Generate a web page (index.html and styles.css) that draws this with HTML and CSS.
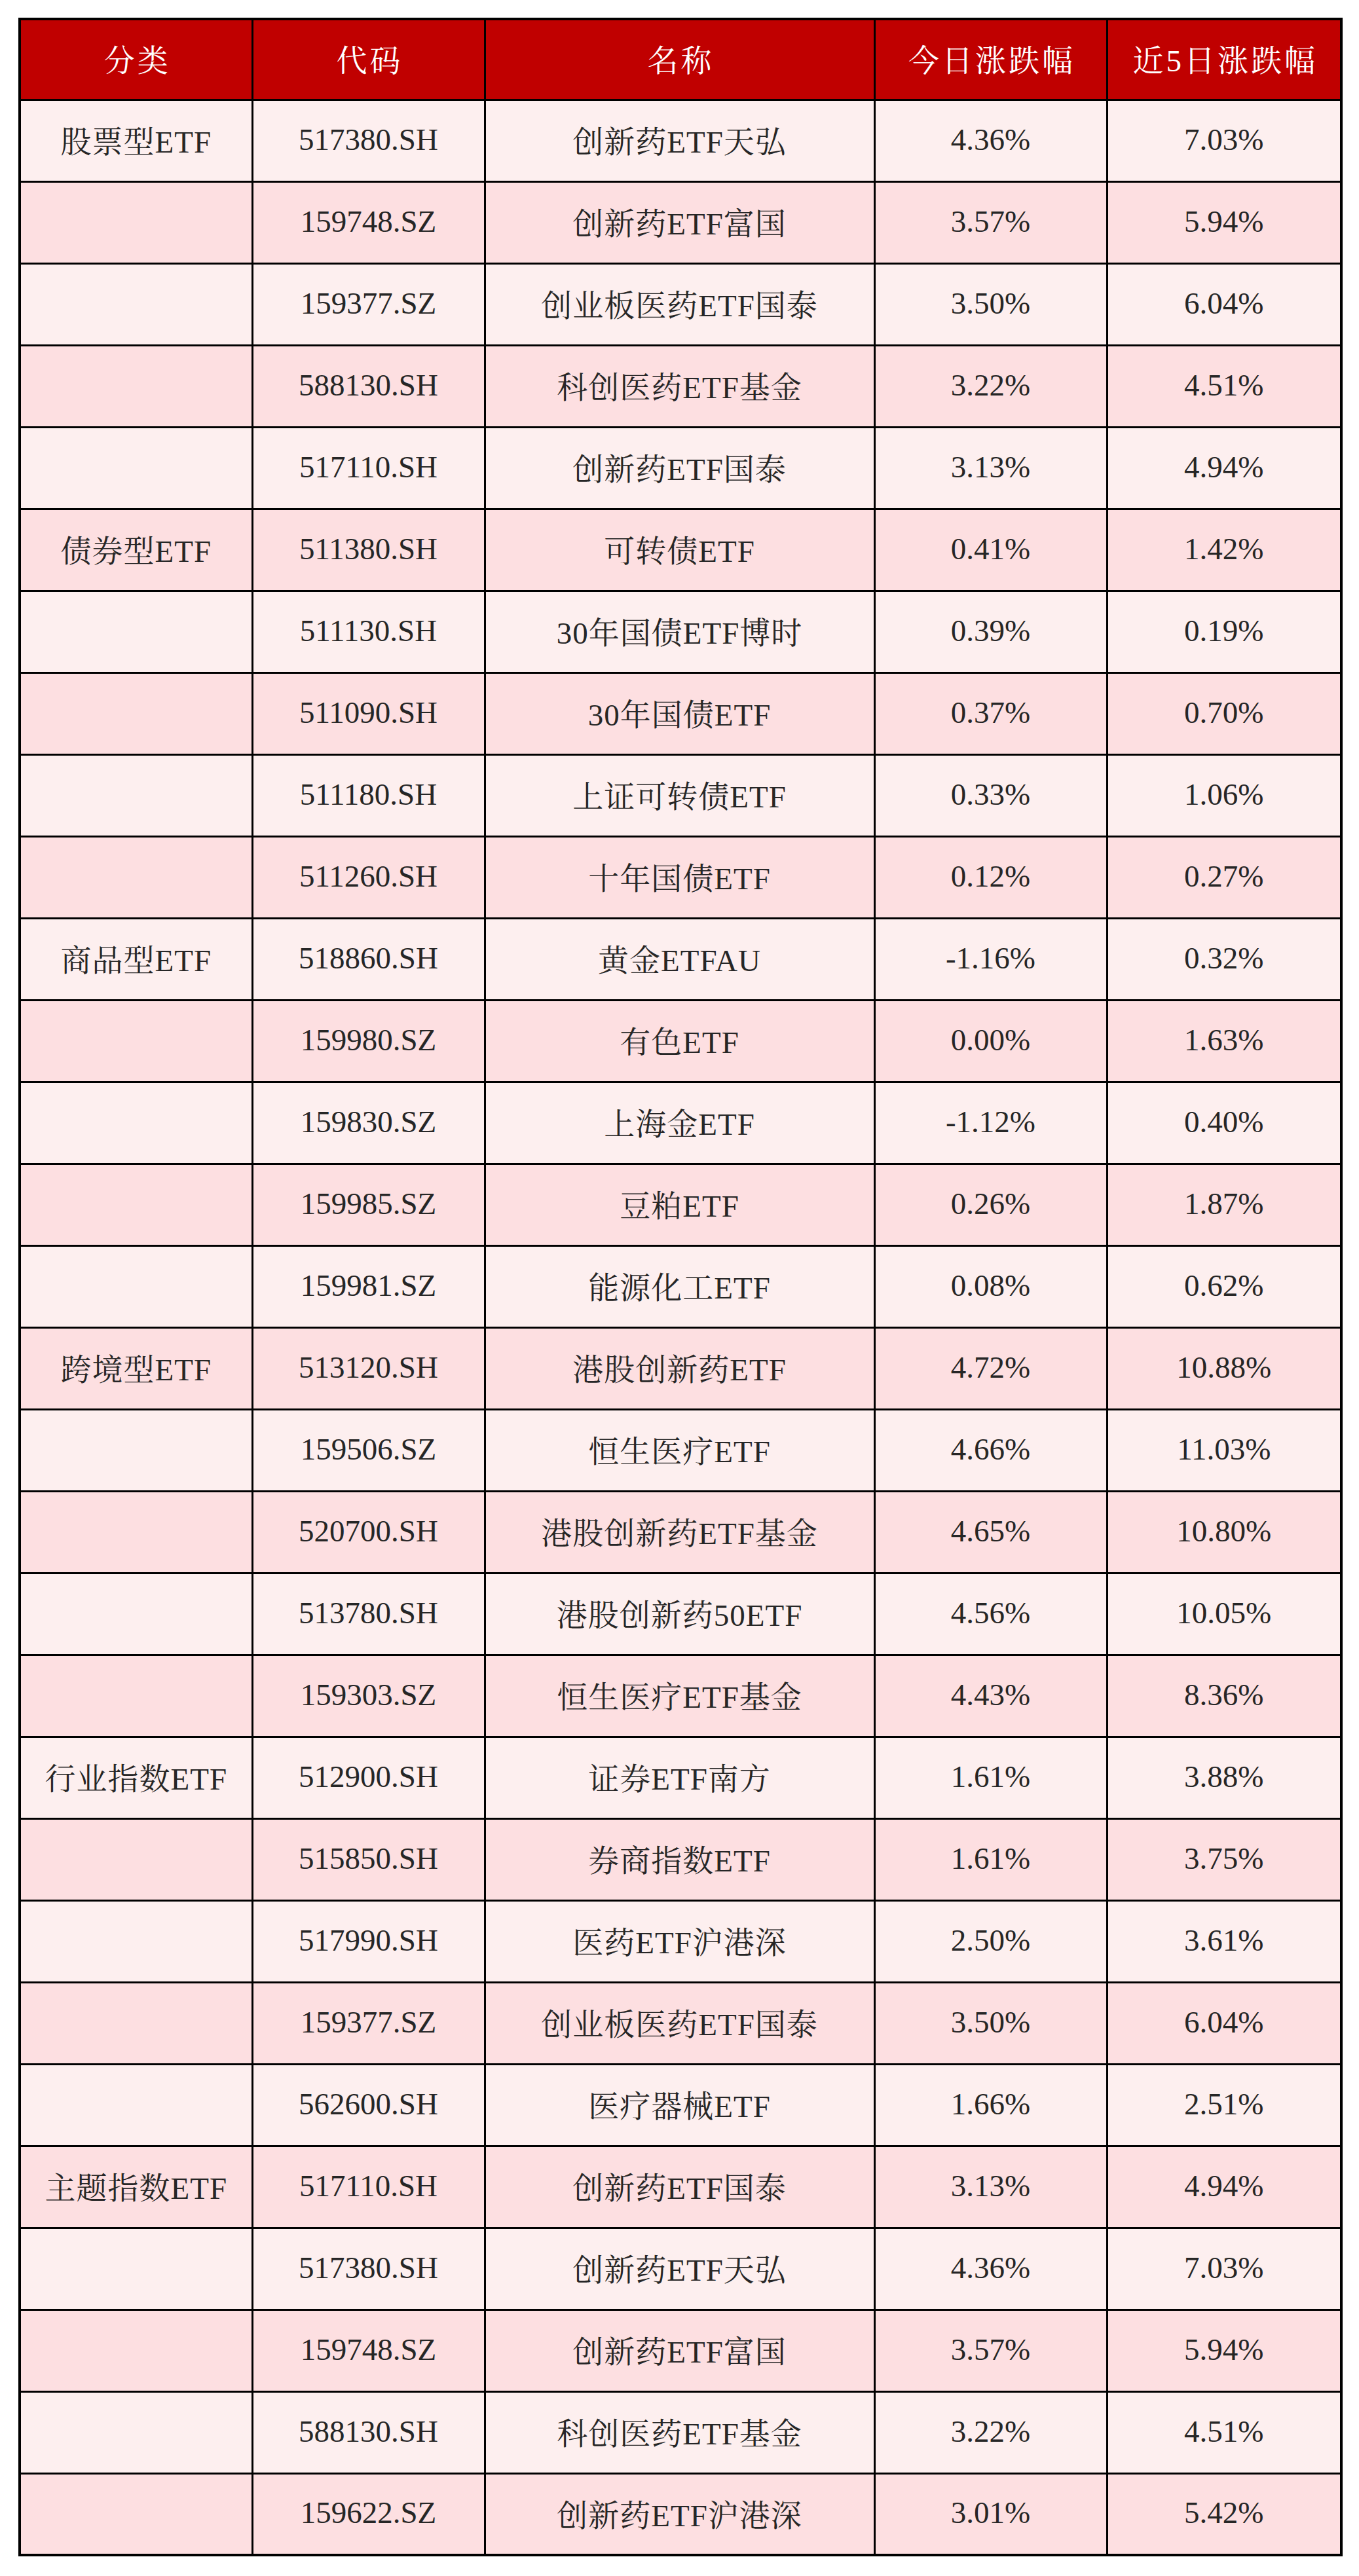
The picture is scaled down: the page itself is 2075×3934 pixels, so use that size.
FILE: index.html
```html
<!DOCTYPE html>
<html lang="zh-CN">
<head>
<meta charset="utf-8">
<title>ETF涨跌幅</title>
<link rel="stylesheet" href="styles.css">
</head>
<body>
<div class="page">
<table class="etf">
<colgroup>
<col class="c-cat"><col class="c-code"><col class="c-name"><col class="c-day"><col class="c-week">
</colgroup>
<thead>
<tr><th>分类</th><th>代码</th><th>名称</th><th>今日涨跌幅</th><th>近5日涨跌幅</th></tr>
</thead>
<tbody>
<tr><td class="cjk">股票型ETF</td><td>517380.SH</td><td class="cjk">创新药ETF天弘</td><td>4.36%</td><td>7.03%</td></tr>
<tr><td></td><td>159748.SZ</td><td class="cjk">创新药ETF富国</td><td>3.57%</td><td>5.94%</td></tr>
<tr><td></td><td>159377.SZ</td><td class="cjk">创业板医药ETF国泰</td><td>3.50%</td><td>6.04%</td></tr>
<tr><td></td><td>588130.SH</td><td class="cjk">科创医药ETF基金</td><td>3.22%</td><td>4.51%</td></tr>
<tr><td></td><td>517110.SH</td><td class="cjk">创新药ETF国泰</td><td>3.13%</td><td>4.94%</td></tr>
<tr><td class="cjk">债券型ETF</td><td>511380.SH</td><td class="cjk">可转债ETF</td><td>0.41%</td><td>1.42%</td></tr>
<tr><td></td><td>511130.SH</td><td class="cjk">30年国债ETF博时</td><td>0.39%</td><td>0.19%</td></tr>
<tr><td></td><td>511090.SH</td><td class="cjk">30年国债ETF</td><td>0.37%</td><td>0.70%</td></tr>
<tr><td></td><td>511180.SH</td><td class="cjk">上证可转债ETF</td><td>0.33%</td><td>1.06%</td></tr>
<tr><td></td><td>511260.SH</td><td class="cjk">十年国债ETF</td><td>0.12%</td><td>0.27%</td></tr>
<tr><td class="cjk">商品型ETF</td><td>518860.SH</td><td class="cjk">黄金ETFAU</td><td>-1.16%</td><td>0.32%</td></tr>
<tr><td></td><td>159980.SZ</td><td class="cjk">有色ETF</td><td>0.00%</td><td>1.63%</td></tr>
<tr><td></td><td>159830.SZ</td><td class="cjk">上海金ETF</td><td>-1.12%</td><td>0.40%</td></tr>
<tr><td></td><td>159985.SZ</td><td class="cjk">豆粕ETF</td><td>0.26%</td><td>1.87%</td></tr>
<tr><td></td><td>159981.SZ</td><td class="cjk">能源化工ETF</td><td>0.08%</td><td>0.62%</td></tr>
<tr><td class="cjk">跨境型ETF</td><td>513120.SH</td><td class="cjk">港股创新药ETF</td><td>4.72%</td><td>10.88%</td></tr>
<tr><td></td><td>159506.SZ</td><td class="cjk">恒生医疗ETF</td><td>4.66%</td><td>11.03%</td></tr>
<tr><td></td><td>520700.SH</td><td class="cjk">港股创新药ETF基金</td><td>4.65%</td><td>10.80%</td></tr>
<tr><td></td><td>513780.SH</td><td class="cjk">港股创新药50ETF</td><td>4.56%</td><td>10.05%</td></tr>
<tr><td></td><td>159303.SZ</td><td class="cjk">恒生医疗ETF基金</td><td>4.43%</td><td>8.36%</td></tr>
<tr><td class="cjk">行业指数ETF</td><td>512900.SH</td><td class="cjk">证券ETF南方</td><td>1.61%</td><td>3.88%</td></tr>
<tr><td></td><td>515850.SH</td><td class="cjk">券商指数ETF</td><td>1.61%</td><td>3.75%</td></tr>
<tr><td></td><td>517990.SH</td><td class="cjk">医药ETF沪港深</td><td>2.50%</td><td>3.61%</td></tr>
<tr><td></td><td>159377.SZ</td><td class="cjk">创业板医药ETF国泰</td><td>3.50%</td><td>6.04%</td></tr>
<tr><td></td><td>562600.SH</td><td class="cjk">医疗器械ETF</td><td>1.66%</td><td>2.51%</td></tr>
<tr><td class="cjk">主题指数ETF</td><td>517110.SH</td><td class="cjk">创新药ETF国泰</td><td>3.13%</td><td>4.94%</td></tr>
<tr><td></td><td>517380.SH</td><td class="cjk">创新药ETF天弘</td><td>4.36%</td><td>7.03%</td></tr>
<tr><td></td><td>159748.SZ</td><td class="cjk">创新药ETF富国</td><td>3.57%</td><td>5.94%</td></tr>
<tr><td></td><td>588130.SH</td><td class="cjk">科创医药ETF基金</td><td>3.22%</td><td>4.51%</td></tr>
<tr><td></td><td>159622.SZ</td><td class="cjk">创新药ETF沪港深</td><td>3.01%</td><td>5.42%</td></tr>
</tbody>
</table>
</div>
</body>
</html>
```

FILE: styles.css
```css
html, body {
  margin: 0;
  padding: 0;
  background: #ffffff;
}

.page {
  padding: 27px 0 0 28px;
}

.etf {
  border-collapse: collapse;
  table-layout: fixed;
  width: 2018px;
  border: 4px solid #000000;
  font-family: "Liberation Serif", "Noto Serif CJK SC", "Noto Sans CJK SC", serif;
  font-size: 47px;
  color: #262626;
}

.c-cat { width: 355px; }
.c-code { width: 355px; }
.c-name { width: 595px; }
.c-day { width: 355px; }
.c-week { width: 358px; }

.etf th,
.etf td {
  border: 3px solid #000000;
  padding: 0 0 4px 0;
  text-align: center;
  vertical-align: middle;
  white-space: nowrap;
}

.etf thead tr {
  height: 123px;
}

.etf tbody tr {
  height: 125px;
}

.etf th {
  background: #c00000;
  color: #ffffff;
  font-weight: normal;
  font-size: 47px;
  letter-spacing: 4px;
  text-indent: 4px;
}

.etf td.cjk {
  letter-spacing: 1px;
}

.etf tbody tr:nth-child(odd) td {
  background: #fdefef;
}

.etf tbody tr:nth-child(even) td {
  background: #fddfe1;
}
```
